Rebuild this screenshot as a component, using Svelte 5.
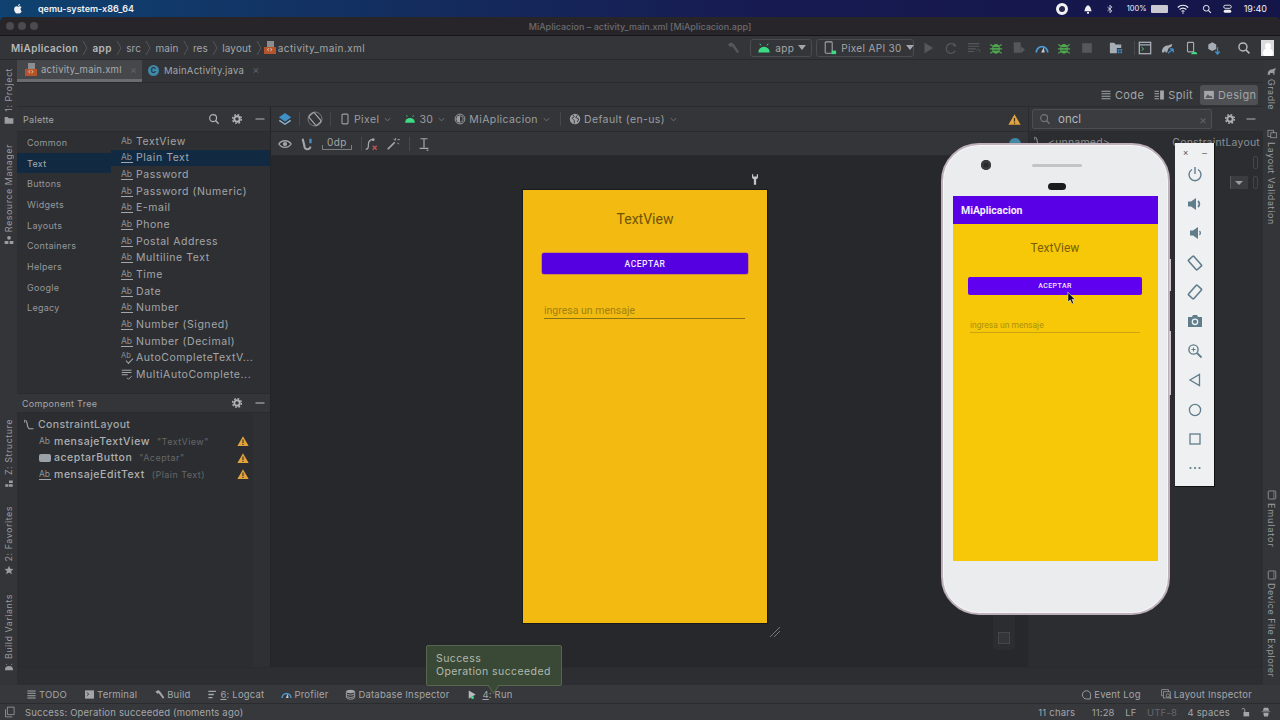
<script lang="ts">
	const ICONS: Record<string, string> = {
		search: '<circle cx="6.8" cy="6.8" r="4.6" fill="none" stroke="currentColor" stroke-width="1.6"/><path d="M10.2 10.2l4 4" stroke="currentColor" stroke-width="1.8"/>',
		gear: '<circle cx="8" cy="8" r="3.6" fill="none" stroke="currentColor" stroke-width="2.6"/><circle cx="8" cy="8" r="5.8" fill="none" stroke="currentColor" stroke-width="2" stroke-dasharray="2.4 2.15"/>',
		minus: '<path d="M2 8h12" stroke="currentColor" stroke-width="1.5"/>',
		android: '<path d="M1.5 13a6.5 6.5 0 0 1 13 0z" fill="currentColor"/><path d="M4.5 5L3.2 3M11.5 5l1.3-2" stroke="currentColor" stroke-width="1.1"/>',
		folder: '<path d="M1 3h5l1.5 2H15v9H1z" fill="currentColor"/>',
		warn: '<path d="M8 1.5L15.5 14.5H.5z" fill="#e2a33c"/><path d="M8 6v4.5M8 11.6v1.6" stroke="#3a3020" stroke-width="1.5"/>',
		layers: '<path d="M8 1l7 5-7 5-7-5z" fill="#3f8fc9"/><path d="M1.5 9.5L8 14l6.5-4.5" fill="none" stroke="#8fb6d3" stroke-width="1.6"/>',
		rotate: '<rect x="4.5" y="2" width="7" height="12" rx="1.5" fill="none" stroke="currentColor" stroke-width="1.2" transform="rotate(-40 8 8)"/><circle cx="8" cy="8" r="7" fill="none" stroke="currentColor" stroke-width=".6"/>',
		phone: '<rect x="4" y="1.5" width="8" height="13" rx="1.4" fill="none" stroke="currentColor" stroke-width="1.5"/>',
		device: '<rect x="2" y="1.500" width="12" height="13" rx="1.500" fill="none" stroke="currentColor" stroke-width="1.300"/><path d="M11 2v12" stroke="currentColor"/>',
		avdcombo: '<rect x="2.500" y="1" width="8" height="13" rx="1" fill="none" stroke="currentColor" stroke-width="1.200"/><rect x="10" y="11" width="5" height="4" fill="#3ddc84"/>',
		theme: '<circle cx="8" cy="8" r="6.5" fill="none" stroke="currentColor" stroke-width="1.3"/><path d="M8 3.5a4.5 4.5 0 0 0 0 9z" fill="currentColor"/><circle cx="8" cy="8" r="4.3" fill="none" stroke="currentColor"/>',
		globe: '<circle cx="8" cy="8" r="7" fill="currentColor"/><path d="M5 2l2 3-3 2 3 3v4M11 3L9 6l4 2-2 4" fill="none" stroke="#35373b" stroke-width="1.2"/>',
		eye: '<path d="M1 8c3-5 11-5 14 0-3 5-11 5-14 0z" fill="none" stroke="currentColor" stroke-width="1.5"/><circle cx="8" cy="8" r="2.4" fill="currentColor"/>',
		magnet: '<path d="M3 2l2 8a3 3 0 0 0 7 1" fill="none" stroke="currentColor" stroke-width="2.4"/><path d="M12 2v5" stroke="#4b8fc4" stroke-width="2.6"/>',
		clear: '<path d="M2 14c3 0 3-2 3-5s1-6 5-6" fill="none" stroke="currentColor" stroke-width="1.5"/><circle cx="10.5" cy="3" r="1.6" fill="currentColor"/><path d="M10 10l4.500 4.500M14.500 10L10 14.500" stroke="#c75450" stroke-width="1.500"/>',
		wand: '<path d="M2 14l8-8" stroke="currentColor" stroke-width="2"/><path d="M11 1v3M13 3h3M13 7l2 1M9 2l1 2" stroke="currentColor"/>',
		guide: '<path d="M4 2h8M8 2v10M3 13h10" fill="none" stroke="currentColor" stroke-width="1.400"/><path d="M10 14.500h4l-2 1.500z" fill="currentColor"/>',
		lines: '<path d="M2 3h12M2 6.300h12M2 9.700h12M2 13h12" stroke="currentColor" stroke-width="1.500"/>',
		split: '<path d="M2 3h6M2 6.300h6M2 9.700h6M2 13h6" stroke="currentColor" stroke-width="1.500"/><rect x="9.500" y="2" width="5" height="12" fill="currentColor"/>',
		image: '<rect x="1.500" y="2.500" width="13" height="11" fill="currentColor"/><path d="M3 12l3.500-5 2.500 3 1.500-1.500L13 12z" fill="#55575a"/>',
		hammer: '<path d="M2 4l4-2.500 3 2 6 9-2 1.500-6-8-2 1z" fill="currentColor"/>',
		play: '<path d="M4 2l10 6-10 6z" fill="currentColor"/>',
		rerun: '<path d="M13 6a5.500 5.500 0 1 0 0 5" fill="none" stroke="currentColor" stroke-width="1.400"/><path d="M10.500 1v5h4z" fill="currentColor"/>',
		apply: '<path d="M1 3h13M1 6h13M1 9h9M1 12h7" stroke="currentColor" stroke-width="1.300"/><path d="M11 11a2 2 0 1 1 3 2" fill="none" stroke="currentColor"/>',
		bug: '<ellipse cx="8" cy="9" rx="4.500" ry="5.500" fill="currentColor"/><path d="M1.500 4l3 2M14.500 4l-3 2M1 9h3M12 9h3M1.500 14l3-2M14.500 14l-3-2" stroke="currentColor" stroke-width="1.300"/><path d="M5 7.500h6M5 10.500h6" stroke="#35373b"/>',
		attach: '<rect x="2" y="1.500" width="8" height="12" rx="1" fill="currentColor"/><path d="M10 6l5 4-5 4z" fill="currentColor"/>',
		gauge: '<path d="M1.500 13a6.500 6.500 0 1 1 13 0" fill="none" stroke="#4a9bd4" stroke-width="2"/><path d="M7 13l3-6 1 6z" fill="#c8cacc"/>',
		stop: '<rect x="2.500" y="2.500" width="11" height="11" fill="currentColor"/>',
		sdk: '<path d="M1 2h5l1.500 2H14v4H9v6H1z" fill="#a6adb5"/><path d="M10 9h2v2h-2zM13 9h2v2h-2zM10 12h2v2h-2zM13 12h2v2h-2z" fill="#3f8fc9"/>',
		shot: '<rect x="1.500" y="1.500" width="13" height="13" fill="none" stroke="currentColor" stroke-width="1.500"/><path d="M1.500 4.500h13" stroke="currentColor" stroke-width="1.500"/><path d="M4 7l2.500 2L4 11" fill="none" stroke="#3ddc84"/>',
		elephant: '<path d="M1 14c0-6 3-9 8-9 2 0 3-2 5-1-1 3-1 3-2 4v6h-2v-3H5v3z" fill="currentColor"/>',
		sync: '<path d="M1 13c0-5 3-8 7-8 2 0 3-2 5-1-1 2-1 3-2 3-2 0-3 2-4 6H5v-2l-2 2z" fill="currentColor"/><path d="M8 14l6-5M14 9v4M14 9h-4" fill="none" stroke="#3f8fc9" stroke-width="1.400"/>',
		avd: '<rect x="4" y="1.500" width="7" height="11" rx="1" fill="none" stroke="currentColor" stroke-width="1.300"/><path d="M8 15a4 4 0 0 1 7.500 0z" fill="#3ddc84"/>',
		pack: '<path d="M1.500 4L6 1.500 10.500 4v5L6 11.500 1.500 9z" fill="currentColor"/><path d="M12 7v7M9.500 12l2.500 3 2.500-3" fill="none" stroke="#3f8fc9" stroke-width="1.500"/>',
		shapes: '<circle cx="8" cy="4.500" r="3" fill="currentColor"/><path d="M1 14.500v-5h6v5zM9 14.500v-5h6v5z" fill="currentColor"/>',
		blocks: '<path d="M8 4h6v4H8zM2 10h5v4H2zM8 10h6v4H8z" fill="currentColor"/>',
		star: '<path d="M8 1l2.100 4.800 5.200.5-3.900 3.400 1.200 5.100L8 12.100l-4.600 2.700 1.200-5.100L.7 6.300l5.200-.5z" fill="currentColor"/>',
		validate: '<rect x="1.500" y="2" width="9" height="10" fill="none" stroke="currentColor" stroke-width="1.200"/><rect x="6" y="6" width="9" height="8" fill="#35373b" stroke="currentColor" stroke-width="1.200"/>',
		terminal: '<rect x="1.500" y="2" width="13" height="12" fill="currentColor"/><path d="M4 5l3 2.500L4 10" fill="none" stroke="#35373b" stroke-width="1.300"/>',
		logcat: '<path d="M2 3.500h11M2 8h8M2 12.500h6" stroke="currentColor" stroke-width="2"/>',
		db: '<ellipse cx="8" cy="3.500" rx="6" ry="2.500" fill="currentColor"/><path d="M2 6.500c1 3 11 3 12 0M2 10c1 3 11 3 12 0M2 3.500v9c1 3 11 3 12 0v-9" fill="none" stroke="currentColor" stroke-width="1.300"/>',
		bubble: '<path d="M13.500 14.500H8a6 6 0 1 1 6-6z" fill="none" stroke="currentColor" stroke-width="1.300"/>',
		inspect: '<rect x="1" y="1" width="10" height="9" fill="none" stroke="currentColor"/><rect x="3.500" y="4" width="10" height="9" fill="#35373b" stroke="currentColor"/><circle cx="10" cy="9.500" r="2.500" fill="none" stroke="currentColor"/><path d="M12 11.500l3 3" stroke="currentColor" stroke-width="1.300"/>',
		tools: '<path d="M4 1v3.500C4 6.500 6 7.500 6.500 7.500V15h3V7.500C10 7.500 12 6.500 12 4.500V1h-1.600v3H5.600V1z" fill="currentColor"/>',
		lock: '<rect x="4" y="8" width="9" height="7" fill="currentColor"/><path d="M6 8V4a2.300 2.300 0 0 0-4.500 0" fill="none" stroke="currentColor" stroke-width="1.500"/>',
		hector: '<path d="M3 6h10L11.500 1h-7zM1 7.500h14M4 9h8v3l-1 3H5l-1-3z" fill="currentColor"/><path d="M1 7.500h14" stroke="currentColor"/>',
		tree: '<path d="M3 2c4 0 1 8 5 11h6" fill="none" stroke="currentColor" stroke-width="1.500"/><path d="M2 1v4" stroke="currentColor"/>',
		sheets: '<path d="M4.500 1.500h9v10h-9z" fill="none" stroke="currentColor"/><path d="M2 4.500v10h9" fill="none" stroke="currentColor"/>',
		multi: '<path d="M1 3h13M1 6h13M1 9h8" stroke="currentColor" stroke-width="1.500"/><path d="M8 13l2 2 4-4" fill="none" stroke="currentColor" stroke-width="1.300"/>',
		power: '<path d="M5 3.500a6 6 0 1 0 6 0" fill="none" stroke="currentColor" stroke-width="1.400"/><path d="M8 1v7" stroke="currentColor" stroke-width="1.400"/>',
		volup: '<path d="M1 5.500h3L9 2v12l-5-3.500H1z" fill="currentColor"/><path d="M11 5a4 4 0 0 1 0 6" fill="none" stroke="currentColor" stroke-width="1.800"/>',
		voldown: '<path d="M3 5.500h3L11 2v12l-5-3.500H3z" fill="currentColor"/><path d="M12.500 6a3 3 0 0 1 0 4" fill="none" stroke="currentColor" stroke-width="1.200"/>',
		rotl: '<rect x="4.500" y="1.500" width="7" height="13" rx="1" fill="none" stroke="currentColor" stroke-width="1.600" transform="rotate(-42 8 8)"/>',
		rotr: '<rect x="4.500" y="1.500" width="7" height="13" rx="1" fill="none" stroke="currentColor" stroke-width="1.600" transform="rotate(42 8 8)"/>',
		camera: '<path d="M1 4h4l1-2h4l1 2h4v10H1z" fill="currentColor"/><circle cx="8" cy="8.800" r="2.700" fill="none" stroke="#eef0f2" stroke-width="1.300"/>',
		zoom: '<circle cx="6.500" cy="6.500" r="4.600" fill="none" stroke="currentColor" stroke-width="1.400"/><path d="M10 10l4.500 4.500" stroke="currentColor" stroke-width="1.800"/><path d="M4.500 6.500h4M6.500 4.500v4" stroke="currentColor"/>',
		back: '<path d="M12.500 2.500v11L3 8z" fill="none" stroke="currentColor" stroke-width="1.300"/>',
		home: '<circle cx="8" cy="8" r="5.600" fill="none" stroke="currentColor" stroke-width="1.300"/>',
		square: '<rect x="3" y="3" width="10" height="10" fill="none" stroke="currentColor" stroke-width="1.300"/>',
		more: '<circle cx="3.500" cy="8" r="1.100" fill="currentColor"/><circle cx="8" cy="8" r="1.100" fill="currentColor"/><circle cx="12.500" cy="8" r="1.100" fill="currentColor"/>',
		bell: '<path d="M3 11c1-1 1-7 5-8 4 1 4 7 5 8z" fill="currentColor"/><circle cx="8" cy="13" r="1.500" fill="currentColor"/>',
		bt: '<path d="M4 5l7 6-3 3V2l3 3-7 6" fill="none" stroke="currentColor" stroke-width="1.200"/>',
		wifi: '<path d="M1 6c4-4 10-4 14 0M3.500 8.700c3-2.500 6-2.500 9 0M6 11.200c1.500-1 2.500-1 4 0" fill="none" stroke="currentColor" stroke-width="1.500"/><circle cx="8" cy="13.300" r="1" fill="currentColor"/>',
		control: '<rect x="2.500" y="2.500" width="11" height="4.500" rx="2.200" fill="none" stroke="currentColor" stroke-width="1.300"/><rect x="2.500" y="9" width="11" height="4.500" rx="2.200" fill="currentColor"/>',
		apple: '<path d="M11 8.500c0-1.700 1.300-2.400 1.400-2.500-.8-1.100-2-1.300-2.400-1.300-1-.1-2 .6-2.500.6S6.200 4.700 5.300 4.700C4 4.700 2.800 5.500 2.200 6.700c-1.200 2.100-.3 5.200.9 6.900.6.800 1.200 1.700 2.100 1.700.9 0 1.200-.5 2.200-.5s1.300.5 2.200.5c.9 0 1.500-.8 2.100-1.700.7-1 .9-1.900 1-2-.1 0-1.700-.7-1.700-2.600zM9.400 3.500c.5-.6.800-1.400.7-2.200-.7 0-1.500.5-2 1-.4.500-.8 1.300-.7 2.100.8.100 1.500-.3 2-.9z" fill="currentColor"/>'
	};

	const crumbs = ['src', 'main', 'res', 'layout'];
	const categories = ['Common', 'Text', 'Buttons', 'Widgets', 'Layouts', 'Containers', 'Helpers', 'Google', 'Legacy'];
	const widgets = [
		'Plain Text', 'Password', 'Password (Numeric)', 'E-mail', 'Phone', 'Postal Address',
		'Multiline Text', 'Time', 'Date', 'Number', 'Number (Signed)', 'Number (Decimal)'
	];
	const runIcons = [
		['play', 'off'], ['rerun', 'off'], ['apply', 'off'], ['bug', 'bugc'], ['attach', 'off'], ['gauge', ''],
		['bug', 'bugc'], ['stop', 'off']
	];
	const emuIcons = ['power', 'volup', 'voldown', 'rotl', 'rotr', 'camera', 'zoom', 'back', 'home', 'square', 'more'];
	const leftRail = [
		['1: Project', 'folder', 'r-project'],
		['Resource Manager', 'shapes', 'r-resource'],
		['Z: Structure', 'blocks', 'r-structure'],
		['2: Favorites', 'star', 'r-favorites'],
		['Build Variants', 'android', 'r-variants']
	];
	const rightRail = [
		['Gradle', 'elephant', 'r-gradle'],
		['Layout Validation', 'validate', 'r-validation'],
		['Emulator', 'device', 'r-emulator'],
		['Device File Explorer', 'device', 'r-explorer']
	];
	const tools = [
		['', 'TODO', 'lines'], ['', 'Terminal', 'terminal'], ['', 'Build', 'hammer'], ['6', ': Logcat', 'logcat'],
		['', 'Profiler', 'gauge'], ['', 'Database Inspector', 'db']
	];
	const tree = [
		['ab', 'mensajeTextView', '"TextView"'],
		['button', 'aceptarButton', '"Aceptar"'],
		['abu', 'mensajeEditText', '(Plain Text)']
	];
</script>

{#snippet ic(name: string, cls = '')}
	<svg class="ic {cls}" viewBox="0 0 16 16">{@html ICONS[name]}</svg>
{/snippet}

{#snippet chevron()}
	<svg class="chev" viewBox="0 0 8 8"><path d="M1 2.500l3 3 3-3" fill="none" stroke="currentColor" /></svg>
{/snippet}

{#snippet sep()}
	<svg class="crumb-sep" viewBox="0 0 6 16"><path d="M1 1l4 7-4 7" fill="none" stroke="currentColor" /></svg>
{/snippet}

{#snippet xmlIcon()}
	<span class="xml"><i></i><b>‹›</b></span>
{/snippet}

<div class="app">
	<header class="menubar">
		<span class="apple">{@render ic('apple')}</span>
		<strong class="menu-app">qemu-system-x86_64</strong>
		<div class="menu-right">
			<span class="rec"></span>
			{@render ic('bell', 'm-bell')}
			{@render ic('bt', 'm-bt')}
			<span class="pct">100%</span>
			<span class="batt"></span>
			{@render ic('wifi', 'm-wifi')}
			{@render ic('search', 'm-search')}
			{@render ic('control', 'm-control')}
			<span class="clock">19:40</span>
		</div>
	</header>

	<div class="window">
		<div class="titlebar">
			<div class="lights"><i></i><i></i><i></i></div>
			<span>MiAplicacion – activity_main.xml [MiAplicacion.app]</span>
		</div>

		<nav class="navbar">
			<strong class="c-project">MiAplicacion</strong>
			{@render sep()}
			<strong>app</strong>
			{#each crumbs as c}
				{@render sep()}
				<span class="crumb">{c}</span>
			{/each}
			{@render sep()}
			<span class="c-xml">{@render xmlIcon()}</span>
			<span class="c-file">activity_main.xml</span>

			<div class="run-tools">
				{@render ic('hammer', 'off hammer')}
				<div class="combo c-app">{@render ic('android', 'green')}<span>app</span><em></em></div>
				<div class="combo c-device">{@render ic('avdcombo')}<span>Pixel API 30</span><em></em></div>
				<div class="run-icons">
					{#each runIcons as [name, cls]}
						{@render ic(name, cls)}
					{/each}
				</div>
				<div class="more-icons">
					{@render ic('sdk')}
					<i class="nav-sep"></i>
					{@render ic('shot', 'lite')}
					{@render ic('sync', 'lite')}
					{@render ic('avd', 'lite')}
					{@render ic('pack', 'lite')}
					{@render ic('search', 'nav-search')}
					<span class="avatar"><i></i></span>
				</div>
			</div>
		</nav>

		<div class="main">
			<aside class="rail left">
				{#each leftRail as [label, icon, cls]}
					<div class="rail-item {cls}"><span>{label}</span>{@render ic(icon)}</div>
				{/each}
			</aside>

			<div class="center">
				<div class="tabs">
					<div class="tab active">{@render xmlIcon()}<span>activity_main.xml</span><small>×</small></div>
					<div class="tab second-tab"><span class="java">C</span><span>MainActivity.java</span><small>×</small></div>
				</div>

				<div class="modes">
					<span class="mode">{@render ic('lines')}Code</span>
					<span class="mode m-split">{@render ic('split')}Split</span>
					<span class="mode on">{@render ic('image')}Design</span>
				</div>

				<div class="workspace">
					<section class="palette">
						<div class="panel-head">
							<span>Palette</span>
							<div class="head-icons">{@render ic('search')}{@render ic('gear')}{@render ic('minus')}</div>
						</div>
						<div class="palette-body">
							<ul class="cats">
								{#each categories as c}
									<li class:sel={c === 'Text'}>{c}</li>
								{/each}
							</ul>
							<ul class="widgets">
								<li><span class="ab">Ab</span>TextView</li>
								{#each widgets as w}
									<li class:sel={w === 'Plain Text'}><span class="ab u">Ab</span>{w}</li>
								{/each}
								<li><span class="ab chk">Ab</span>AutoCompleteTextV...</li>
								<li><span class="wicon">{@render ic('multi')}</span>MultiAutoComplete...</li>
							</ul>
						</div>
						<div class="panel-head tree-head">
							<span>Component Tree</span>
							<div class="head-icons">{@render ic('gear')}{@render ic('minus')}</div>
						</div>
						<div class="tree">
							<div class="tree-root">{@render ic('tree')}ConstraintLayout</div>
							{#each tree as [kind, name, hint]}
								<div class="tree-row">
									{#if kind === 'button'}
										<span class="tbtn"></span>
									{:else}
										<span class="ab" class:u={kind === 'abu'}>Ab</span>
									{/if}
									<b>{name}</b><span class="hint">{hint}</span>
									{@render ic('warn', 'tree-warn')}
								</div>
							{/each}
						</div>
					</section>

					<section class="design">
						<div class="dbar">
							{@render ic('layers', 'd-layers')}
							<i class="vsep"></i>
							{@render ic('rotate', 'd-rotate')}
							<i class="vsep"></i>
							<span class="dd d-pixel">{@render ic('phone')}Pixel{@render chevron()}</span>
							<span class="dd d-api">{@render ic('android', 'green')}30{@render chevron()}</span>
							<span class="dd d-theme">{@render ic('theme')}MiAplicacion{@render chevron()}</span>
							<i class="vsep"></i>
							<span class="dd d-locale">{@render ic('globe')}Default (en-us){@render chevron()}</span>
							{@render ic('warn', 'd-warn')}
						</div>
						<div class="dbar second">
							{@render ic('eye')}
							{@render ic('magnet')}
							<span class="margin">0dp</span>
							<i class="vsep sep-a"></i>
							{@render ic('clear')}
							{@render ic('wand')}
							<i class="vsep sep-b"></i>
							{@render ic('guide')}
							<span class="info"></span>
						</div>
						<div class="canvas">
							<div class="surface">
								<span class="wrench">{@render ic('tools')}</span>
								<p class="tv">TextView</p>
								<div class="btn">ACEPTAR</div>
								<div class="edit">ingresa un mensaje</div>
								<svg class="resize" viewBox="0 0 12 12"><path d="M1 11L11 1M5 11l6-6" stroke="#777" fill="none" /></svg>
							</div>
							<div class="zoom-pad"><span></span></div>
						</div>
					</section>

					<section class="attrs">
						<div class="attr-search">
							<div class="sfield">{@render ic('search')}<span>oncl</span><small>×</small></div>
							{@render ic('gear')}
							{@render ic('minus')}
						</div>
						<div class="attr-row"><span class="unnamed">{@render ic('tree')}&lt;unnamed&gt;</span><span>ConstraintLayout</span></div>
						<div class="attr-ctl"><i></i></div>
						<div class="attr-ctl"><em></em><i></i></div>
					</section>
				</div>
				<div class="blank"></div>
			</div>

			<aside class="rail right">
				{#each rightRail as [label, icon, cls]}
					<div class="rail-item {cls}">{@render ic(icon)}<span>{label}</span></div>
				{/each}
			</aside>
		</div>

		<div class="toolbar">
			<div class="tool-group">
				{#each tools as [key, label, icon]}
					<span class="tool">{@render ic(icon)}<span><u>{key}</u>{label}</span></span>
				{/each}
				<span class="tool run">{@render ic('play')}<i></i><span><u>4</u>: Run</span></span>
			</div>
			<div class="tool-group end">
				<span class="tool">{@render ic('bubble')}Event Log</span>
				<span class="tool">{@render ic('inspect')}Layout Inspector</span>
			</div>
		</div>

		<footer class="status">
			{@render ic('sheets')}
			<span class="status-msg">Success: Operation succeeded (moments ago)</span>
			<div class="status-right">
				<span class="chars">11 chars</span>
				<span>11:28</span>
				<span>LF</span>
				<span class="dim">UTF-8</span>
				<span>4 spaces</span>
				{@render ic('lock')}
				{@render ic('hector')}
			</div>
		</footer>
	</div>

	<div class="balloon">
		<p>Success</p>
		<p>Operation succeeded</p>
	</div>

	<div class="phone">
		<div class="bezel-top">
			<span class="cam"></span>
			<span class="speaker"></span>
			<span class="sensor"></span>
		</div>
		<div class="screen">
			<div class="appbar">MiAplicacion</div>
			<p class="p-tv">TextView</p>
			<div class="p-btn">ACEPTAR</div>
			<div class="p-edit">ingresa un mensaje</div>
			<svg class="cursor" viewBox="0 0 10 14"><path d="M1 0v11l2.600-2.400L5.500 13l2-.8L5.600 8H9z" fill="#111" stroke="#fff" stroke-width=".6" /></svg>
		</div>
	</div>

	<div class="emu-bar">
		<div class="emu-win"><span>×</span><span>–</span></div>
		{#each emuIcons as name}
			<span class="emu-btn">{@render ic(name)}</span>
		{/each}
	</div>
</div>

<style>
	:global(body) {
		margin: 0;
		background: #17184a;
	}

	* {
		box-sizing: border-box;
	}

	p,
	ul {
		margin: 0;
		padding: 0;
		list-style: none;
	}

	.app {
		position: relative;
		width: 1280px;
		height: 720px;
		overflow: hidden;
		display: flex;
		flex-direction: column;
		font-family: Inter, 'Liberation Sans', sans-serif;
		color: #a4a6a9;
		background: linear-gradient(90deg, #0f4270, #171a50 60%, #14164a);
	}

	.ic {
		width: 12px;
		height: 12px;
		flex: none;
		display: block;
	}

	.chev {
		width: 7px;
		height: 7px;
		margin-left: 2px;
		color: #7c7e81;
	}

	.green {
		color: #3ddc84;
	}

	.off {
		color: #55575a;
	}

	.lite {
		color: #a6adb5;
	}

	.bugc {
		color: #4fa84f;
	}

	/* mac menu bar */
	.menubar {
		height: 17px;
		flex: none;
		display: flex;
		align-items: center;
		padding-left: 13px;
		color: #f0f0f4;
		font-size: 9px;
	}

	.apple .ic {
		width: 11px;
		height: 11px;
	}

	.menu-app {
		margin-left: 14px;
		font-weight: 600;
	}

	.menu-right {
		margin-left: auto;
		display: flex;
		align-items: center;
		padding-right: 13px;
	}

	.rec {
		width: 12px;
		height: 12px;
		border-radius: 50%;
		border: 3px solid #f2f2f2;
		background: #26264f;
	}

	.m-bell {
		margin-left: 14px;
	}

	.m-bt {
		margin-left: 11px;
		width: 10px;
	}

	.pct {
		margin-left: 12px;
		font-size: 7.5px;
	}

	.batt {
		width: 17px;
		height: 8px;
		margin-left: 4px;
		background: #c9c9d2;
		border-radius: 1px;
	}

	.m-wifi {
		margin-left: 9px;
	}

	.m-search {
		margin-left: 13px;
		width: 10px;
		height: 10px;
	}

	.m-control {
		margin-left: 10px;
		width: 11px;
	}

	.clock {
		margin-left: 11px;
		font-size: 9px;
	}

	/* window chrome */
	.window {
		flex: 1;
		min-height: 0;
		display: flex;
		flex-direction: column;
		border-radius: 5px 5px 0 0;
		overflow: hidden;
		background: #323437;
	}

	.titlebar {
		position: relative;
		height: 19px;
		flex: none;
		display: flex;
		align-items: center;
		justify-content: center;
		background: #28252a;
		border-bottom: 1px solid #161618;
		color: #6b6b6e;
		font-size: 9px;
		font-weight: 500;
	}

	.lights {
		position: absolute;
		left: 6px;
		top: 5px;
		display: flex;
		gap: 4px;
	}

	.lights i {
		width: 8px;
		height: 8px;
		border-radius: 50%;
		background: #4c4a4d;
	}

	.navbar {
		height: 24px;
		flex: none;
		display: flex;
		align-items: center;
		padding-left: 11px;
		background: #333538;
		border-bottom: 1px solid #28292c;
		font-size: 10px;
		letter-spacing: 0.35px;
		white-space: nowrap;
	}

	.navbar strong {
		font-weight: 600;
		color: #b6b8ba;
	}

	.navbar .crumb {
		letter-spacing: 0.1px;
	}

	.navbar .crumb-sep {
		width: 6px;
		height: 16px;
		margin: 0 4.2px;
		color: #55575a;
		flex: none;
	}

	.c-xml {
		margin-left: -2px;
	}

	.c-file {
		letter-spacing: 0.4px;
	}

	.xml {
		position: relative;
		width: 12px;
		height: 13px;
		flex: none;
		display: block;
		margin-right: 2px;
	}

	.xml i {
		position: absolute;
		left: 3px;
		top: 0;
		width: 7px;
		height: 7px;
		background: #8b8d90;
	}

	.xml b {
		position: absolute;
		left: 0;
		bottom: 0;
		width: 12px;
		height: 7px;
		background: #b5532b;
		color: #e8d9d0;
		font-size: 7px;
		line-height: 6px;
		text-align: center;
		font-weight: 400;
	}

	.run-tools {
		margin-left: auto;
		display: flex;
		align-items: center;
		padding-right: 6px;
	}

	.run-tools .ic {
		width: 14px;
		height: 14px;
	}

	.hammer {
		margin-right: 10px;
	}

	.combo {
		height: 18px;
		display: flex;
		align-items: center;
		border: 1px solid #4a4c50;
		border-radius: 3px;
		color: #a4a6a9;
		font-size: 10px;
		padding: 0 6px;
		gap: 4px;
	}

	.combo em {
		margin-left: auto;
		border: 4px solid transparent;
		border-top: 5px solid #a4a6a9;
		border-bottom: 0;
	}

	.c-app {
		width: 62px;
	}

	.c-device {
		width: 98px;
		margin-left: 4px;
	}

	.run-icons {
		display: flex;
		gap: 8.7px;
		margin-left: 7px;
	}

	.more-icons {
		display: flex;
		align-items: center;
		gap: 9px;
		margin-left: 15px;
	}

	.nav-sep {
		width: 1px;
		height: 14px;
		margin: 0 -6px 0 2px;
		background: #45474a;
	}

	.run-tools .nav-search {
		margin-left: 7px;
		color: #b8babc;
	}

	.avatar {
		position: relative;
		width: 13px;
		height: 16px;
		margin-left: 1px;
		background: #dcdcdc;
		overflow: hidden;
	}

	.avatar i {
		position: absolute;
		left: 3.5px;
		top: 3px;
		width: 6px;
		height: 6px;
		border-radius: 50%;
		background: #fff;
		box-shadow: 0 7px 0 2px #fff;
	}

	/* main area */
	.main {
		flex: 1;
		min-height: 0;
		display: flex;
	}

	.rail {
		width: 17px;
		flex: none;
		display: flex;
		flex-direction: column;
		background: #333538;
		font-size: 9px;
		letter-spacing: 0.5px;
		color: #9a9c9f;
	}

	.rail-item {
		display: flex;
		flex-direction: column;
		align-items: center;
		gap: 3px;
		white-space: nowrap;
	}

	.rail-item span {
		writing-mode: vertical-rl;
		line-height: 17px;
	}

	.rail.left .rail-item span {
		transform: rotate(180deg);
	}

	.rail-item .ic {
		width: 10px;
		height: 10px;
	}

	.r-project {
		margin-top: 8px;
	}

	.r-resource {
		margin-top: 19px;
	}

	.r-structure {
		margin-top: 174px;
	}

	.r-favorites {
		margin-top: 18px;
	}

	.r-variants {
		margin-top: 19px;
	}

	.r-gradle {
		margin-top: 6px;
	}

	.r-validation {
		margin-top: 19px;
	}

	.r-emulator {
		margin-top: 265px;
	}

	.r-explorer {
		margin-top: 22px;
	}

	.rail.right .r-validation span {
		letter-spacing: 0.6px;
	}

	.rail.right .r-emulator span {
		letter-spacing: 0.9px;
	}

	.center {
		flex: 1;
		min-width: 0;
		display: flex;
		flex-direction: column;
	}

	.tabs {
		height: 23px;
		flex: none;
		display: flex;
		font-size: 9.5px;
		letter-spacing: 0.25px;
		border-bottom: 1px solid #2a2b2e;
	}

	.tab {
		display: flex;
		align-items: center;
		padding: 0 8px 2px 8px;
		gap: 2px;
		white-space: nowrap;
	}

	.second-tab {
		padding-left: 6px;
	}

	.tab.active {
		width: 125px;
		background: #45474a;
		border-bottom: 3px solid #6a6c70;
		padding-top: 2px;
		color: #a9abae;
	}

	.tab small {
		margin-left: 6px;
		font-size: 11px;
		color: #5f6164;
	}

	.java {
		width: 11px;
		height: 11px;
		margin-right: 3px;
		border-radius: 50%;
		background: #3f87a6;
		color: #1f3440;
		font-size: 7px;
		font-weight: 700;
		line-height: 11px;
		text-align: center;
	}

	.modes {
		height: 24px;
		flex: none;
		display: flex;
		justify-content: flex-end;
		align-items: center;
		gap: 5px;
		padding-right: 5px;
		border-bottom: 1px solid #2a2b2e;
		font-size: 11px;
	}

	.mode {
		display: flex;
		align-items: center;
		gap: 3px;
		height: 20px;
		padding: 0 3px;
		border-radius: 3px;
		letter-spacing: 0.4px;
	}

	.m-split {
		margin-left: -2px;
	}

	.mode.on {
		background: #4e5053;
		margin-left: -1px;
		padding: 0 2px 0 3px;
		width: 58px;
	}

	.workspace {
		flex: 1;
		min-height: 0;
		display: flex;
	}

	/* palette + tree */
	.palette {
		width: 254px;
		flex: none;
		display: flex;
		flex-direction: column;
		border-right: 1px solid #232427;
		background: #2d2f32;
	}

	.panel-head {
		height: 25px;
		flex: none;
		display: flex;
		align-items: center;
		justify-content: space-between;
		padding: 0 4px 0 6px;
		background: #333538;
		border-bottom: 1px solid #2a2b2e;
		font-size: 9px;
		letter-spacing: 0.3px;
	}

	.head-icons {
		display: flex;
		gap: 11px;
		color: #b0b2b5;
	}

	.palette-body {
		height: 261px;
		flex: none;
		display: flex;
	}

	.cats {
		width: 94px;
		flex: none;
		font-size: 9px;
		letter-spacing: 0.3px;
		color: #96989b;
	}

	.cats li {
		height: 20.7px;
		display: flex;
		align-items: center;
		padding-left: 10px;
	}

	.cats .sel {
		background: #112a42;
		color: #aaacaf;
	}

	.widgets {
		flex: 1;
		padding-top: 1px;
		font-size: 10.5px;
		letter-spacing: 0.55px;
		color: #a4a6a9;
		white-space: nowrap;
	}

	.widgets li {
		height: 16.65px;
		display: flex;
		align-items: center;
		padding-left: 10px;
	}

	.widgets .sel {
		background: #112a42;
	}

	.ab {
		position: relative;
		width: 12px;
		margin-right: 3px;
		font-size: 8.5px;
		line-height: 10px;
		color: #8f9194;
		flex: none;
		letter-spacing: 0;
	}

	.ab.u {
		border-bottom: 1px solid #a4a6a9;
	}

	.ab.chk {
		font-size: 7.5px;
		padding-bottom: 3px;
		line-height: 8px;
	}

	.ab.chk::after {
		content: '';
		position: absolute;
		right: 0;
		bottom: 1px;
		width: 6px;
		height: 3px;
		border-left: 1px solid #a4a6a9;
		border-bottom: 1px solid #a4a6a9;
		transform: rotate(-45deg);
	}

	.wicon {
		width: 12px;
		margin-right: 3px;
	}

	.tree-head {
		height: 20px;
		padding-left: 5px;
		padding-right: 4px;
		border-top: 1px solid #2a2b2e;
	}

	.tree {
		flex: 1;
		padding: 3px 21px 0 6px;
		font-size: 10.5px;
		letter-spacing: 0.4px;
		background: linear-gradient(90deg, #2b2d30 236px, #2e3033 236px);
	}

	.tree-root {
		height: 17px;
		display: flex;
		align-items: center;
		gap: 3px;
		font-weight: 500;
	}

	.tree-row {
		height: 16.6px;
		display: flex;
		align-items: center;
		padding-left: 16px;
		white-space: nowrap;
	}

	.tree-row b {
		font-weight: 500;
		color: #aeb0b3;
		letter-spacing: 0.55px;
	}

	.tbtn {
		width: 12px;
		height: 8px;
		margin-right: 3px;
		border-radius: 2px;
		background: #9aa1a8;
		flex: none;
	}

	.hint {
		margin-left: 7px;
		font-size: 9px;
		letter-spacing: 0.45px;
		color: #66686b;
	}

	.tree-warn {
		margin-left: auto;
	}

	/* design surface */
	.design {
		flex: 1;
		min-width: 0;
		display: flex;
		flex-direction: column;
		border-right: 1px solid #2a2b2e;
	}

	.dbar {
		height: 25px;
		flex: none;
		display: flex;
		align-items: center;
		padding: 0 7px;
		background: #333538;
		border-bottom: 1px solid #2a2b2e;
		font-size: 10.5px;
		letter-spacing: 0.4px;
		white-space: nowrap;
	}

	.dbar.second {
		height: 24px;
		gap: 8px;
	}

	.dbar.second .ic {
		width: 14px;
		height: 14px;
	}

	.vsep {
		width: 1px;
		height: 14px;
		background: #45474a;
		margin: 0 7px;
	}

	.second .sep-a {
		margin: 0 -6px 0 1px;
	}

	.second .sep-b {
		margin: 0 -1px 0 1px;
	}

	.d-layers {
		width: 14px;
		height: 14px;
	}

	.d-rotate {
		width: 16px;
		height: 16px;
	}

	.dd {
		display: flex;
		align-items: center;
		gap: 3px;
		color: #9c9ea1;
	}

	.d-pixel {
		margin-left: 1px;
	}

	.d-api {
		margin-left: 13px;
	}

	.d-theme {
		margin: 0 3px 0 9px;
	}

	.d-locale {
		margin-left: 1px;
	}

	.d-warn {
		margin-left: auto;
		width: 13px;
		height: 13px;
	}

	.margin {
		position: relative;
		width: 30px;
		height: 13px;
		font-size: 10px;
		line-height: 11px;
		text-align: center;
	}

	.margin::after {
		content: '';
		position: absolute;
		left: 0;
		right: 0;
		bottom: 0;
		height: 4px;
		border: 1px solid #7a7c80;
		border-top: 0;
	}

	.info {
		margin-left: auto;
		width: 12px;
		height: 12px;
		border-radius: 50%;
		background: #3f87a6;
	}

	.canvas {
		position: relative;
		flex: 1;
		min-height: 0;
		background: #26282b;
		padding: 34px 0 0 252px;
	}

	.surface {
		position: relative;
		width: 244px;
		height: 433px;
		display: flex;
		flex-direction: column;
		align-items: center;
		background: #f3bb11;
		box-shadow: 0 0 0 1px #1a1a1a;
		font-family: Roboto, sans-serif;
	}

	.wrench {
		position: absolute;
		right: 6px;
		top: -17px;
		color: #c4c6c8;
	}

	.wrench .ic {
		width: 12px;
		height: 13px;
	}

	.tv {
		margin-top: 20px;
		font-size: 14px;
		line-height: 18px;
		color: #6e5403;
	}

	.btn {
		width: 206px;
		height: 21px;
		margin-top: 25px;
		border-radius: 2px;
		background: #5500e0;
		box-shadow: 0 0 0 0.5px #b05a80;
		color: #f4eaff;
		font-size: 8.5px;
		font-weight: 500;
		letter-spacing: 0.55px;
		line-height: 22px;
		text-align: center;
	}

	.edit {
		width: 201px;
		margin: 30px 1px 0 0;
		height: 15px;
		border-bottom: 1px solid #8f7210;
		font-size: 10.5px;
		line-height: 14px;
		color: #a08010;
	}

	.resize {
		position: absolute;
		right: -14px;
		bottom: -15px;
		width: 12px;
		height: 12px;
	}

	.zoom-pad {
		position: absolute;
		right: 13px;
		top: 440px;
		width: 22px;
		height: 54px;
		padding: 36px 0 0 5px;
		background: #2b2d30;
		border-radius: 3px;
	}

	.zoom-pad span {
		display: block;
		width: 12px;
		height: 12px;
		border: 1px solid #44464a;
		background: #333538;
	}

	/* attributes */
	.attrs {
		width: 234px;
		flex: none;
		background: #2b2d30;
	}

	.attr-search {
		height: 25px;
		display: flex;
		align-items: center;
		padding: 0 6px 0 3px;
		gap: 9px;
		background: #333538;
		border-bottom: 1px solid #2a2b2e;
		color: #b0b2b5;
	}

	.sfield {
		width: 182px;
		height: 20px;
		display: flex;
		align-items: center;
		gap: 7px;
		padding: 0 4px 0 6px;
		margin-right: 3px;
		background: #3a3c3f;
		border: 1px solid #4c4e51;
		border-radius: 2px;
		color: #b4b6b9;
		font-size: 11.5px;
	}

	.sfield .ic {
		color: #74767a;
	}

	.sfield small {
		margin-left: auto;
		font-size: 12px;
		color: #5f6164;
	}

	.attr-row {
		height: 20px;
		display: flex;
		justify-content: space-between;
		align-items: center;
		padding: 0 3px 0 4px;
		font-size: 10.5px;
		letter-spacing: 0.2px;
		color: #8c8e91;
	}

	.unnamed {
		display: flex;
		align-items: center;
		gap: 3px;
	}

	.attr-ctl {
		height: 20px;
		display: flex;
		align-items: center;
		justify-content: flex-end;
		gap: 5px;
		padding-right: 5px;
	}

	.attr-ctl i {
		width: 5px;
		height: 13px;
		border: 1px solid #44464a;
		border-radius: 2px;
	}

	.attr-ctl em {
		position: relative;
		width: 18px;
		height: 13px;
		background: #3a3c3f;
		border-left: 1px solid #55575a;
	}

	.attr-ctl em::after {
		content: '';
		position: absolute;
		left: 4px;
		top: 5px;
		border: 4px solid transparent;
		border-top: 4px solid #9a9c9f;
		border-bottom: 0;
	}

	.blank {
		height: 18px;
		flex: none;
		border-top: 1px solid #2a2b2e;
		background: #2c2e31;
	}

	/* bottom bars */
	.toolbar {
		height: 18px;
		flex: none;
		display: flex;
		justify-content: space-between;
		align-items: center;
		padding: 0 28px 0 26px;
		background: #36383b;
		font-size: 9.5px;
		letter-spacing: 0.2px;
	}

	.tool-group {
		display: flex;
		gap: 17px;
	}

	.tool-group.end {
		gap: 20px;
	}

	.tool {
		position: relative;
		display: flex;
		align-items: center;
		gap: 2px;
		white-space: nowrap;
	}

	.tool .ic {
		width: 11px;
		height: 11px;
	}

	.run {
		gap: 5px;
	}

	.run .ic {
		color: #b8babc;
	}

	.run i {
		position: absolute;
		left: 5px;
		bottom: 1px;
		width: 3px;
		height: 3px;
		border-radius: 50%;
		background: #3ddc84;
	}

	.status {
		height: 17px;
		flex: none;
		display: flex;
		align-items: center;
		padding: 0 9px 0 4px;
		background: #36383b;
		border-top: 1px solid #2a2b2e;
		font-size: 9.5px;
		letter-spacing: 0.18px;
	}

	.status-msg {
		margin-left: 9px;
	}

	.status-right {
		margin-left: auto;
		display: flex;
		align-items: center;
		gap: 10.5px;
	}

	.chars {
		margin-right: 6px;
	}

	.status-right .ic {
		width: 10px;
		height: 10px;
	}

	.dim {
		color: #66686b;
	}

	/* notification */
	.balloon {
		position: absolute;
		left: 426px;
		top: 645px;
		width: 136px;
		height: 41px;
		padding: 6px 0 0 9px;
		background: #394935;
		border: 1px solid #56664f;
		border-radius: 2px;
		font-size: 10.5px;
		line-height: 13px;
		letter-spacing: 0.42px;
		color: #b3b8ae;
	}

	.balloon::after {
		content: '';
		position: absolute;
		left: 62px;
		bottom: -6px;
		width: 8px;
		height: 8px;
		background: #394935;
		border-right: 1px solid #56664f;
		border-bottom: 1px solid #56664f;
		transform: rotate(45deg) skew(10deg, 10deg);
	}

	/* emulator window */
	.phone {
		position: absolute;
		left: 941px;
		top: 143px;
		width: 229px;
		height: 472px;
		padding: 0 10px;
		border: 2px solid #bdb0b8;
		border-radius: 38px;
		background: #ebecee;
		box-shadow: inset 0 0 0 1px #f6f6f7;
	}

	.phone::before,
	.phone::after {
		content: '';
		position: absolute;
		right: -3px;
		width: 2px;
		background: #cfc8cc;
	}

	.phone::before {
		top: 114px;
		height: 32px;
	}

	.phone::after {
		top: 186px;
		height: 64px;
	}

	.bezel-top {
		position: relative;
		height: 51px;
	}

	.cam {
		position: absolute;
		left: 28px;
		top: 15px;
		width: 10px;
		height: 10px;
		border-radius: 50%;
		background: #2a2a2c;
		box-shadow: inset 0 0 0 2.5px #3c3c3e;
	}

	.speaker {
		position: absolute;
		left: 79px;
		top: 19px;
		width: 50px;
		height: 3px;
		border-radius: 2px;
		background: #c4c4c6;
	}

	.sensor {
		position: absolute;
		left: 95px;
		top: 38px;
		width: 18px;
		height: 7px;
		border-radius: 4px;
		background: #1b1b1d;
	}

	.screen {
		position: relative;
		width: 205px;
		height: 365px;
		display: flex;
		flex-direction: column;
		align-items: center;
		background: #f6c808;
		font-family: Roboto, sans-serif;
	}

	.appbar {
		width: 100%;
		height: 28px;
		padding-left: 8px;
		background: #5a00e6;
		color: #f4ecff;
		font-size: 10.5px;
		font-weight: 700;
		line-height: 29px;
	}

	.p-tv {
		margin: 17px 1px 0 0;
		font-size: 12px;
		line-height: 15px;
		color: #7a5f04;
	}

	.p-btn {
		width: 174px;
		height: 18px;
		margin: 21px 1px 0 0;
		border-radius: 2px;
		background: #5f00f0;
		color: #f4eaff;
		font-size: 7px;
		font-weight: 500;
		letter-spacing: 0.45px;
		line-height: 18px;
		text-align: center;
	}

	.p-edit {
		width: 170px;
		height: 14px;
		margin: 24px 1px 0 0;
		border-bottom: 1px solid #c9a312;
		font-size: 8.5px;
		line-height: 13px;
		color: #ad9008;
	}

	.cursor {
		position: absolute;
		left: 114px;
		top: 96px;
		width: 9px;
		height: 13px;
	}

	.emu-bar {
		position: absolute;
		left: 1175px;
		top: 143px;
		width: 40px;
		height: 344px;
		padding-bottom: 3px;
		display: flex;
		flex-direction: column;
		align-items: center;
		background: #eff0f2;
		border-right: 1px solid #111;
		border-bottom: 1px solid #111;
		color: #607d8b;
	}

	.emu-win {
		width: 100%;
		height: 17px;
		display: flex;
		justify-content: space-between;
		align-items: center;
		padding: 4px 7px 0 8px;
		font-size: 9px;
		color: #555;
		font-family: 'Liberation Sans', sans-serif;
	}

	.emu-btn {
		height: 29.4px;
		flex: none;
		display: flex;
		align-items: center;
	}

	.emu-btn .ic {
		width: 16px;
		height: 16px;
	}
</style>
